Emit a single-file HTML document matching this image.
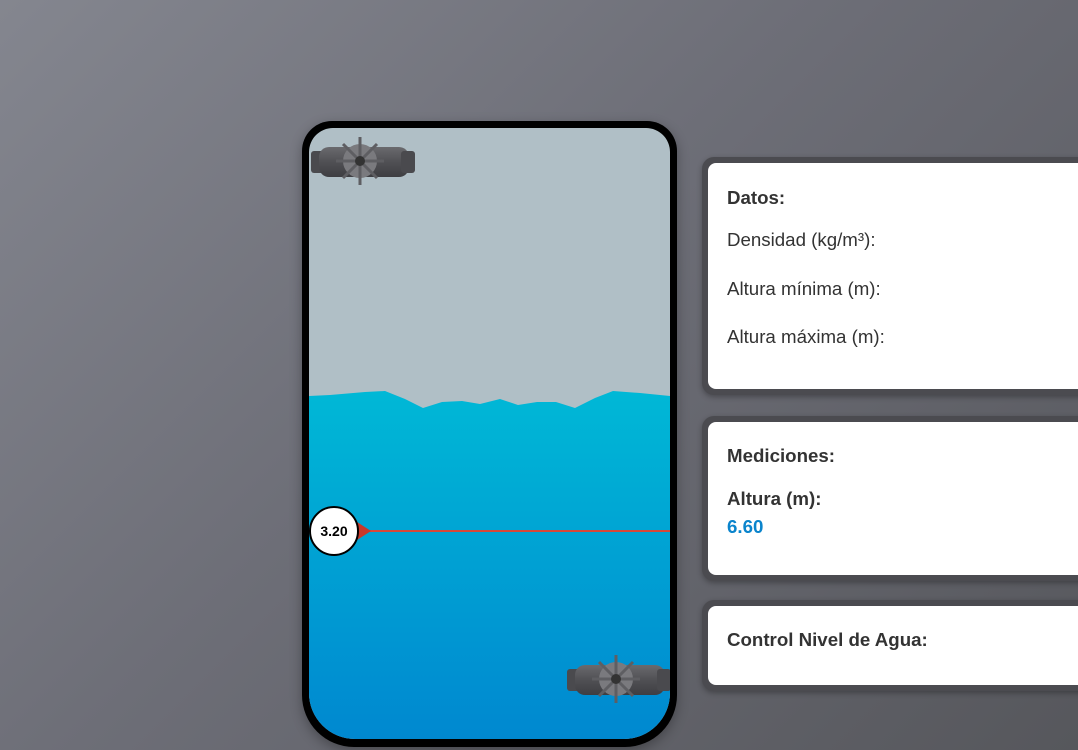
<!DOCTYPE html>
<html><head><meta charset="utf-8"><style>
*{margin:0;padding:0;box-sizing:border-box}
html,body{width:1078px;height:750px;overflow:hidden}
body{background:linear-gradient(135deg,#84868f 0%,#6d6e77 45%,#56575c 100%);font-family:"Liberation Sans",sans-serif;position:relative}
.tank{position:absolute;left:302px;top:121px;width:375px;height:626px;background:#000;border-radius:30px 30px 52px 52px;box-shadow:0 4px 12px rgba(0,0,0,.3)}
.inner{position:absolute;left:7px;top:7px;width:361px;height:611px;border-radius:24px 24px 46px 46px;overflow:hidden;background:#b0bfc6}
.panel{position:absolute;left:702px;width:400px;background:#4b4b50;border-radius:12px;box-shadow:0 2px 6px rgba(0,0,0,.3)}
.panel .w{position:absolute;left:6px;top:6px;right:0;bottom:6px;background:#fff;border-radius:8px;color:#333;font-size:18.7px}
.w div{position:absolute;left:19px;white-space:nowrap}
b{font-weight:bold}
</style></head><body>
<div class="tank"><div class="inner">
<svg width="361" height="611" style="position:absolute;left:0;top:0">
<defs><linearGradient id="wg" x1="0" y1="0" x2="0" y2="1"><stop offset="0" stop-color="#00b8d6"/><stop offset="1" stop-color="#0088d0"/></linearGradient>
<linearGradient id="pg" x1="0" y1="0" x2="0" y2="1"><stop offset="0" stop-color="#6a6a6e"/><stop offset=".5" stop-color="#505054"/><stop offset="1" stop-color="#3e3e42"/></linearGradient></defs>
<polygon fill="url(#wg)" points="0,268 21,267 56,264 76,263 96,271 114,280 133,274 153,273 171,276 191,271 209,277 228,274 247,274 266,280 286,270 304,263 331,265 361,268 361,611 0,611"/>
<g id="v" transform="translate(0,15)">
<rect x="2" y="8" width="14" height="22" rx="3" fill="#4a4a4e"/>
<rect x="10" y="4" width="90" height="30" rx="10" fill="url(#pg)"/>
<rect x="92" y="8" width="14" height="22" rx="3" fill="#4a4a4e"/>
<circle cx="51" cy="18" r="17" fill="#7a7a7e"/>
<g stroke="#5e5e62" stroke-width="3"><line x1="51" y1="-6" x2="51" y2="42"/><line x1="27" y1="18" x2="75" y2="18"/><line x1="34" y1="1" x2="68" y2="35"/><line x1="68" y1="1" x2="34" y2="35"/></g>
<circle cx="51" cy="18" r="5" fill="#333"/>
</g>
<use href="#v" x="256" y="518"/>
<line x1="55" y1="403" x2="361" y2="403" stroke="#d8483a" stroke-width="2"/>
<polygon points="48,394 62,403 48,412" fill="#c8382a"/>
<circle cx="25" cy="403" r="24" fill="#fff" stroke="#000" stroke-width="2"/>
<text x="25" y="408" text-anchor="middle" font-family="Liberation Sans" font-weight="bold" font-size="14" fill="#000">3.20</text>
</svg>
</div></div>
<div class="panel" style="top:157px;height:238px"><div class="w">
<div style="top:24px"><b>Datos:</b></div>
<div style="top:66px">Densidad (kg/m³):</div>
<div style="top:115px">Altura mínima (m):</div>
<div style="top:163px">Altura máxima (m):</div>
</div></div>
<div class="panel" style="top:416px;height:165px"><div class="w">
<div style="top:23px"><b>Mediciones:</b></div>
<div style="top:66px"><b>Altura (m):</b></div>
<div style="top:94px;color:#0a84cc"><b>6.60</b></div>
</div></div>
<div class="panel" style="top:600px;height:91px"><div class="w">
<div style="top:23px"><b>Control Nivel de Agua:</b></div>
</div></div>
</body></html>
